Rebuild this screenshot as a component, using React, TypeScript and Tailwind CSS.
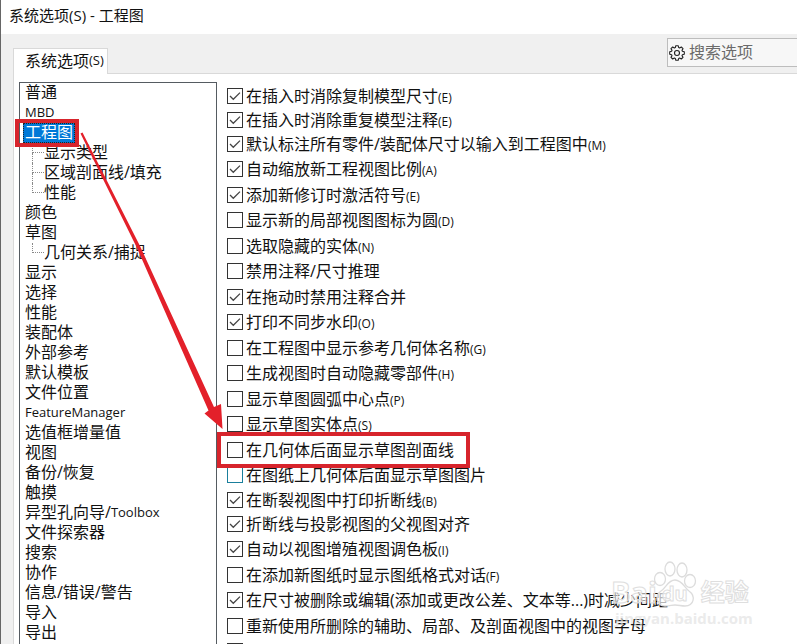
import { clsx } from "clsx";

type TreeItem = {
  label: string;
  latin?: string;
  children?: string[];
  active?: boolean;
};

type Option = {
  label: string;
  hotkey?: string;
  checked?: boolean;
  hovered?: boolean;
  marked?: boolean;
};

const tree: TreeItem[] = [
  { label: "普通" },
  { label: "", latin: "MBD" },
  {
    label: "工程图",
    active: true,
    children: ["显示类型", "区域剖面线/填充", "性能"],
  },
  { label: "颜色" },
  { label: "草图", children: ["几何关系/捕捉"] },
  { label: "显示" },
  { label: "选择" },
  { label: "性能" },
  { label: "装配体" },
  { label: "外部参考" },
  { label: "默认模板" },
  { label: "文件位置" },
  { label: "", latin: "FeatureManager" },
  { label: "选值框增量值" },
  { label: "视图" },
  { label: "备份/恢复" },
  { label: "触摸" },
  { label: "异型孔向导/", latin: "Toolbox" },
  { label: "文件探索器" },
  { label: "搜索" },
  { label: "协作" },
  { label: "信息/错误/警告" },
  { label: "导入" },
  { label: "导出" },
];

const groups: { compact?: boolean; options: Option[] }[] = [
  {
    compact: true,
    options: [
      { label: "在插入时消除复制模型尺寸", hotkey: "(E)", checked: true },
      { label: "在插入时消除重复模型注释", hotkey: "(E)", checked: true },
      {
        label: "默认标注所有零件/装配体尺寸以输入到工程图中",
        hotkey: "(M)",
        checked: true,
      },
    ],
  },
  {
    options: [
      { label: "自动缩放新工程视图比例", hotkey: "(A)", checked: true },
      { label: "添加新修订时激活符号", hotkey: "(E)", checked: true },
      { label: "显示新的局部视图图标为圆", hotkey: "(D)" },
      { label: "选取隐藏的实体", hotkey: "(N)" },
      { label: "禁用注释/尺寸推理" },
      { label: "在拖动时禁用注释合并", checked: true },
      { label: "打印不同步水印", hotkey: "(O)", checked: true },
      { label: "在工程图中显示参考几何体名称", hotkey: "(G)" },
      { label: "生成视图时自动隐藏零部件", hotkey: "(H)" },
      { label: "显示草图圆弧中心点", hotkey: "(P)" },
      { label: "显示草图实体点", hotkey: "(S)" },
      { label: "在几何体后面显示草图剖面线", marked: true },
      { label: "在图纸上几何体后面显示草图图片", hovered: true },
    ],
  },
  {
    compact: true,
    options: [
      { label: "在断裂视图中打印折断线", hotkey: "(B)", checked: true },
      { label: "折断线与投影视图的父视图对齐", checked: true },
    ],
  },
  {
    options: [
      { label: "自动以视图增殖视图调色板", hotkey: "(I)", checked: true },
      { label: "在添加新图纸时显示图纸格式对话", hotkey: "(F)" },
      {
        label: "在尺寸被删除或编辑(添加或更改公差、文本等...)时减少间距",
        checked: true,
      },
      { label: "重新使用所删除的辅助、局部、及剖面视图中的视图字母" },
      { label: "" },
    ],
  },
];

function GearIcon() {
  return (
    <svg
      viewBox="0 0 16 16"
      className="size-4 shrink-0"
      fill="none"
      stroke="#222"
      strokeWidth="1.1"
      strokeLinejoin="round"
    >
      <path d="M6.3 2.6 L6.8 .7 H9.2 L9.7 2.6 L10.6 3 L12.3 2 L14 3.7 L13 5.4 L13.4 6.3 L15.3 6.8 V9.2 L13.4 9.7 L13 10.6 L14 12.3 L12.3 14 L10.6 13 L9.7 13.4 L9.2 15.3 H6.8 L6.3 13.4 L5.4 13 L3.7 14 L2 12.3 L3 10.6 L2.6 9.7 L.7 9.2 V6.8 L2.6 6.3 L3 5.4 L2 3.7 L3.7 2 L5.4 3Z" />
      <circle cx="8" cy="8" r="2.5" />
    </svg>
  );
}

function Tree() {
  return (
    <nav className="-mb-1 w-[198px] shrink-0 border border-[#555b61]">
      <ul>
        {tree.map((item, index) => (
          <li key={index}>
            <a href="#" className="flex h-5 items-center pl-[3px]">
              <span
                className={clsx(
                  "relative flex h-5 items-center whitespace-nowrap px-0.5",
                  item.active &&
                    "bg-[#0078d7] text-white outline-1 -outline-offset-1 outline-dotted outline-[#222]"
                )}
              >
                {item.label && <span className="pb-0.5">{item.label}</span>}
                {item.latin && <span className="text-[13px]">{item.latin}</span>}
                {item.active && (
                  <span className="absolute -inset-y-1 -left-2 -right-1 z-10 border-4 border-[#d7242c]" />
                )}
              </span>
            </a>
            {item.children && (
              <ul className="pl-3">
                {item.children.map((child, i) => (
                  <li key={child} className="flex h-5">
                    <span className="flex w-3 shrink-0 flex-col">
                      <span className="h-2.5 border-b border-l border-dotted border-[#888]" />
                      {i < item.children!.length - 1 && (
                        <span className="h-2.5 border-l border-dotted border-[#888]" />
                      )}
                    </span>
                    <a
                      href="#"
                      className="flex items-center whitespace-nowrap pb-0.5"
                    >
                      {child}
                    </a>
                  </li>
                ))}
              </ul>
            )}
          </li>
        ))}
      </ul>
    </nav>
  );
}

function OptionRow({ option, compact }: { option: Option; compact?: boolean }) {
  return (
    <div
      className={clsx(
        "flex items-center",
        compact ? "h-6" : "odd:h-[26px] even:h-[25px]"
      )}
    >
      <label className="relative flex items-center gap-[3px] whitespace-nowrap">
        <span className="relative size-4 shrink-0">
          <input
            type="checkbox"
            defaultChecked={option.checked}
            className={clsx(
              "peer block size-4 appearance-none border bg-white",
              option.hovered ? "border-[#1a7f9c]" : "border-[#333]"
            )}
          />
          <svg
            viewBox="0 0 16 16"
            className="pointer-events-none absolute inset-0 hidden size-4 peer-checked:block"
            fill="none"
            stroke="#444"
            strokeWidth="1.3"
          >
            <path d="M3 8 L6.3 11.3 L13 4.6" />
          </svg>
        </span>
        <span className="leading-6">
          {option.label}
          {option.hotkey && <span className="text-xs">{option.hotkey}</span>}
        </span>
        {option.marked && (
          <span className="absolute -inset-y-1.5 -left-2.5 -right-4 z-10 border-4 border-[#d7242c]" />
        )}
      </label>
    </div>
  );
}

function Arrow() {
  return (
    <svg
      width="230"
      height="435"
      className="pointer-events-none absolute left-0 top-0 z-20"
      fill="#e3202a"
    >
      <path d="M79.5 133.5 L81.5 132.5 L139 246 L213 407 L220 404 L221.5 429 L203.5 413.5 L207.5 410.5 L136 248Z" />
    </svg>
  );
}

function Watermark() {
  return (
    <div className="pointer-events-none absolute bottom-4 right-11 z-20 w-[142px] font-bold text-white/60">
      <div className="flex items-end [-webkit-text-stroke:1px_#dedede]">
        <span className="text-[29px] leading-8">Bai</span>
        <span className="relative -ml-1 flex h-12 w-11 shrink-0 items-end justify-center">
          <svg
            viewBox="0 0 44 48"
            className="absolute inset-0"
            fill="#ffffffb0"
            stroke="#dcdcdc"
            strokeWidth="1.3"
          >
            <ellipse cx="7" cy="19" rx="5.5" ry="6.5" />
            <ellipse cx="17" cy="9" rx="5" ry="7" />
            <ellipse cx="29" cy="10" rx="5" ry="7" />
            <ellipse cx="37" cy="21" rx="5.5" ry="6.5" />
            <path d="M22 20 C15 20 13 28 8 31 C1 36 4 46 12 46 C18 46 18 45 22 45 C26 45 28 46 32 46 C41 46 43 36 36 31 C31 27 29 20 22 20Z" />
          </svg>
          <span className="relative text-xl leading-7">du</span>
        </span>
        <span className="whitespace-nowrap pl-1 text-2xl leading-8">经验</span>
      </div>
      <div className="pl-1 text-[15px] leading-5 text-[#e2e2e2]/70">
        jingyan.baidu.com
      </div>
    </div>
  );
}

export default function App() {
  return (
    <div className="relative flex h-screen flex-col overflow-hidden border-l border-[#666] bg-[#f0f0f0] font-['Open_Sans','Noto_Sans_CJK_SC',sans-serif] text-base text-[#111]">
      <header className="flex h-[34px] shrink-0 items-center bg-white pl-2 text-[15px]">
        <h1 className="pb-1">系统选项(S) - 工程图</h1>
      </header>

      <div className="flex h-[39px] shrink-0 items-end justify-between pl-3">
        <button className="relative z-10 -mb-px flex h-[26px] items-center border border-b-0 border-[#d9d9d9] bg-white pb-0.5 pl-[11px] pr-[3px]">
          系统选项<span className="text-[13px]">(S)</span>
        </button>
        <label className="mb-1.5 flex h-[29px] w-[130px] items-center gap-1 border border-r-0 border-[#bdbdbd] bg-[#f7f7f7] pl-px">
          <GearIcon />
          <input
            type="search"
            aria-label="搜索选项"
            placeholder="搜索选项"
            className="w-full min-w-0 bg-transparent pb-0.5 outline-none placeholder:text-[#6b6b6b]"
          />
        </label>
      </div>

      <main className="ml-3 flex min-h-0 flex-1 gap-2.5 border-l border-t border-[#d9d9d9] bg-white pl-[5px] pt-2">
        <Tree />
        <form className="min-w-0 flex-1 pt-0.5">
          {groups.map((group, index) => (
            <div key={index}>
              {group.options.map((option) => (
                <OptionRow
                  key={option.label}
                  option={option}
                  compact={group.compact}
                />
              ))}
            </div>
          ))}
        </form>
      </main>

      <Arrow />
      <Watermark />
    </div>
  );
}
